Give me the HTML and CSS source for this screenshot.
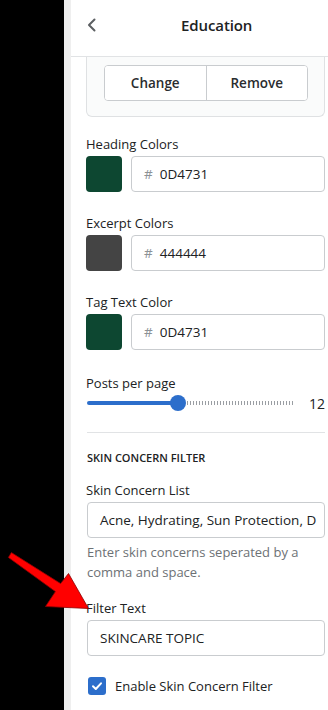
FILE: index.html
```html
<!DOCTYPE html>
<html lang="en">
<head>
<meta charset="utf-8">
<title>Education</title>
<link rel="stylesheet" href="styles.css">
</head>
<body>
<div class="screen">
  <div class="backdrop"></div>
  <div class="gutter"></div>
  <div class="panel">
    <header class="panel-header">
      <button class="back" aria-label="Back">
        <svg width="10" height="14" viewBox="0 0 10 14"><path d="M7.5 1.5 L2 7 L7.5 12.5" fill="none" stroke="#5c5f62" stroke-width="2" stroke-linecap="round" stroke-linejoin="round"/></svg>
      </button>
      <h1 class="title">Education</h1>
    </header>
    <div class="panel-body">
      <div class="card">
        <div class="btn-group">
          <button class="btn">Change</button>
          <button class="btn">Remove</button>
        </div>
      </div>

      <div class="field">
        <label class="label">Heading Colors</label>
        <div class="color-row">
          <span class="swatch" style="background:#0D4731"></span>
          <div class="input hex-input"><span class="hash">#</span><span class="hex">0D4731</span></div>
        </div>
      </div>

      <div class="field">
        <label class="label">Excerpt Colors</label>
        <div class="color-row">
          <span class="swatch" style="background:#444444"></span>
          <div class="input hex-input"><span class="hash">#</span><span class="hex">444444</span></div>
        </div>
      </div>

      <div class="field">
        <label class="label">Tag Text Color</label>
        <div class="color-row">
          <span class="swatch" style="background:#0D4731"></span>
          <div class="input hex-input"><span class="hash">#</span><span class="hex">0D4731</span></div>
        </div>
      </div>

      <div class="field range-field">
        <label class="label">Posts per page</label>
        <div class="slider-row">
          <div class="slider">
            <div class="fill"></div>
            <div class="ticks"></div>
            <div class="thumb"></div>
          </div>
          <span class="value">12</span>
        </div>
      </div>

      <hr class="divider">

      <h2 class="section-title">SKIN CONCERN FILTER</h2>

      <div class="field text-field">
        <label class="label">Skin Concern List</label>
        <div class="input text-input">Acne, Hydrating, Sun Protection, D</div>
        <p class="help">Enter skin concerns seperated by a comma and space.</p>
      </div>

      <div class="field text-field">
        <label class="label">Filter Text</label>
        <div class="input text-input">SKINCARE TOPIC</div>
      </div>

      <label class="check-row">
        <span class="checkbox">
          <svg width="18" height="18" viewBox="0 0 18 18"><path d="M5 9.3 L7.8 12 L13 6.3" fill="none" stroke="#fff" stroke-width="2" stroke-linecap="round" stroke-linejoin="round"/></svg>
        </span>
        <span class="check-label">Enable Skin Concern Filter</span>
      </label>
    </div>
  </div>
  <svg class="arrow" width="328" height="710" viewBox="0 0 328 710">
    <polygon points="11.4,552.6 60.6,583.6 68.5,573.5 88.5,608.5 45.5,606.5 55.4,591.6 8.4,557.4" fill="#ff0000" stroke="#8a0000" stroke-width="0.8" stroke-linejoin="round"/>
  </svg>
</div>
</body>
</html>
```

FILE: styles.css
```css
* { box-sizing: border-box; }

html, body {
  margin: 0;
  padding: 0;
  background: #000;
}

body {
  font-family: "Open Sans", "Noto Sans", sans-serif;
  color: #202223;
}

.screen {
  position: relative;
  width: 328px;
  height: 710px;
  overflow: hidden;
  display: flex;
}

.backdrop {
  width: 64px;
  flex: none;
  background: #000;
}

.gutter {
  width: 7px;
  flex: none;
  background: #efefef;
}

.panel {
  flex: 1;
  min-width: 0;
  background: #fff;
  display: flex;
  flex-direction: column;
}

.panel-header {
  height: 57px;
  flex: none;
  display: flex;
  align-items: center;
  padding-left: 16px;
  padding-bottom: 7px;
  border-bottom: 1px solid #e1e3e5;
}

.back {
  border: 0;
  background: none;
  padding: 0;
  width: 10px;
  height: 14px;
  display: flex;
}

.title {
  margin: 0 0 0 84px;
  font-size: 15px;
  font-weight: 600;
  line-height: 20px;
  letter-spacing: -0.1px;
}

.panel-body {
  padding: 0 3px 0 15px;
  display: flex;
  flex-direction: column;
}

.card {
  background: #fafbfb;
  border: 1px solid #dfe1e3;
  border-top: 0;
  border-radius: 0 0 6px 6px;
  padding: 8px 16px 15px 17px;
  margin-bottom: 17px;
}

.btn-group {
  display: flex;
  height: 36px;
  border: 1px solid #c9cccf;
  border-radius: 4px;
  background: #fff;
  overflow: hidden;
}

.btn {
  flex: 1;
  border: 0;
  background: #fff;
  font-family: inherit;
  font-size: 13.5px;
  font-weight: 600;
  color: #2a2c2e;
  padding: 0;
}

.btn + .btn {
  border-left: 1px solid #c9cccf;
}

.field {
  display: flex;
  flex-direction: column;
  margin-bottom: 21px;
}

.label {
  font-size: 13px;
  line-height: 20px;
  margin-bottom: 2px;
  color: #202223;
}

.color-row {
  display: flex;
  gap: 9px;
  height: 36px;
}

.swatch {
  width: 36px;
  height: 36px;
  flex: none;
  border-radius: 4px;
}

.input {
  height: 36px;
  border: 1px solid #c9cccf;
  border-radius: 4px;
  background: #fff;
  display: flex;
  align-items: center;
  padding: 0 12px;
  font-size: 13.5px;
  color: #202223;
  white-space: nowrap;
  overflow: hidden;
}

.hex-input {
  flex: 1;
}

.hash {
  color: #8c9196;
  margin-right: 7px;
}

.range-field {
  margin-top: 2px;
  margin-bottom: 17px;
}

.range-field .label {
  margin-bottom: 0;
}

.slider-row {
  display: flex;
  align-items: center;
  height: 20px;
  gap: 14px;
}

.slider {
  position: relative;
  width: 212px;
  height: 20px;
  display: flex;
  align-items: center;
  margin-left: 1px;
}

.fill {
  width: 91px;
  height: 4px;
  border-radius: 2px;
  background: #2c6ecb;
}

.ticks {
  flex: 1;
  margin-left: 9px;
  height: 4px;
  background: repeating-linear-gradient(90deg, #9a9ea3 0 1px, transparent 1px 3px);
}

.thumb {
  position: absolute;
  left: 83px;
  top: 2px;
  width: 16px;
  height: 16px;
  border-radius: 50%;
  background: #2c6ecb;
}

.value {
  font-size: 14px;
  color: #202223;
}

.divider {
  border: 0;
  border-top: 1px solid #e1e3e5;
  margin: 2px 0 15px 1px;
}

.section-title {
  margin: 0 0 12px 1px;
  font-size: 11px;
  font-weight: 600;
  line-height: 20px;
  color: #202223;
}

.text-field {
  margin-bottom: 16px;
}

.text-input {
  margin-left: 1px;
}

.help {
  margin: 4px 0 0 1px;
  font-size: 13px;
  line-height: 20px;
  color: #6d7175;
}

.check-row {
  display: flex;
  align-items: center;
  gap: 9px;
  height: 20px;
  margin: 4px 0 0 2px;
}

.checkbox {
  width: 18px;
  height: 18px;
  border-radius: 3px;
  background: #2c6ecb;
  display: flex;
}

.check-label {
  font-size: 13px;
  line-height: 20px;
}

.arrow {
  position: absolute;
  left: 0;
  top: 0;
  pointer-events: none;
}
```
